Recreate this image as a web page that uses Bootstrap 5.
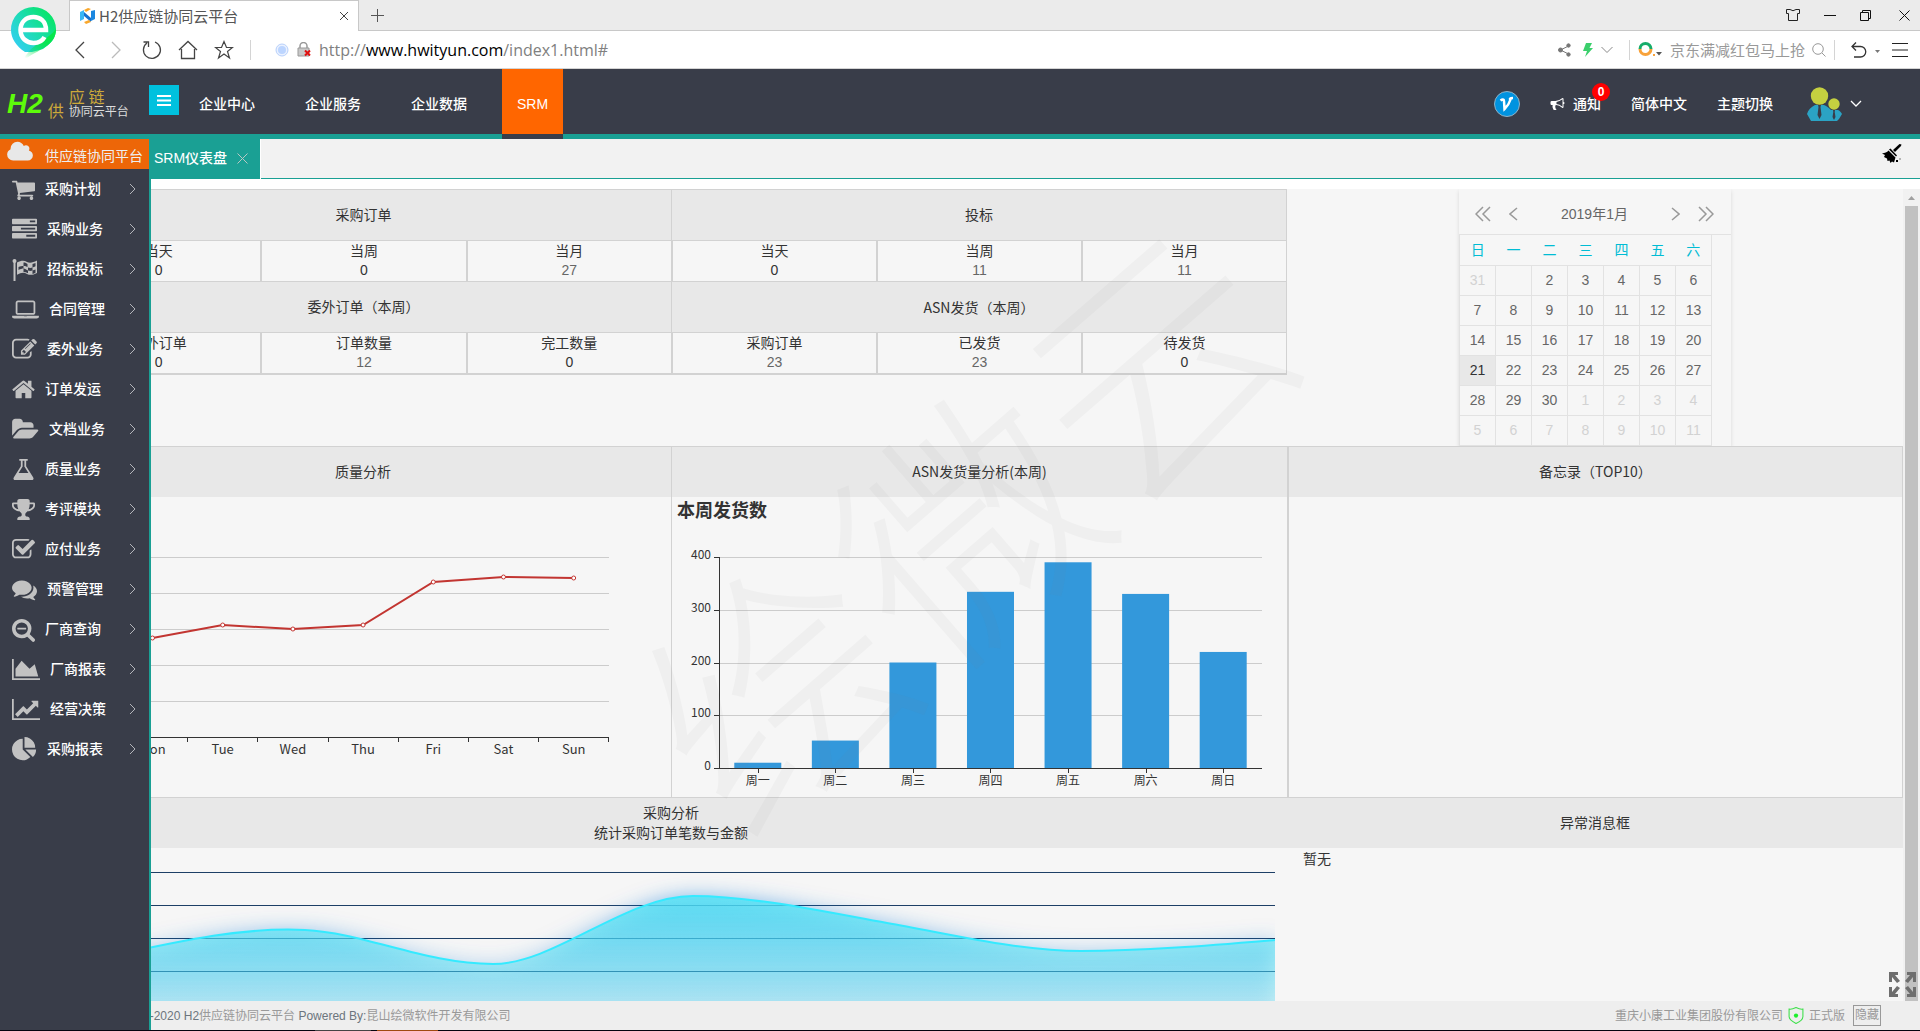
<!DOCTYPE html>
<html lang="zh-CN">
<head>
<meta charset="utf-8">
<meta name="viewport" content="width=device-width, initial-scale=1">
<title>H2供应链协同云平台</title>
<link href="https://cdn.jsdelivr.net/npm/bootstrap@5.3.0/dist/css/bootstrap.min.css" rel="stylesheet">
<script src="https://cdn.jsdelivr.net/npm/bootstrap@5.3.0/dist/js/bootstrap.bundle.min.js"></script>
<style>
  body { font-family: "Liberation Sans", "Noto Sans CJK SC", sans-serif; font-size: 14px; line-height: 20px; color: #333; background: #fff; }
  a { color: inherit; text-decoration: none; }
  button { background: none; border: 0; padding: 0; color: inherit; }
  svg { display: block; flex: none; }
  .yahei { font-family: "Noto Sans CJK SC", sans-serif; }

  /* browser window */
  .tabstrip { height: 31px; background: #ebebeb; border-bottom: 1px solid #c8c8c8; padding-left: 69px; padding-right: 10px; }
  .page-tab { width: 290px; height: 31px; background: #fff; border: 1px solid #c8c8c8; border-bottom: 0; padding: 0 9px 0 10px; font-size: 15px; color: #555; }
  .addressbar { height: 38px; border-bottom: 1px solid #d4d4d4; padding-left: 73px; padding-right: 12px; }
  .browser-logo { left: 8px; top: 5px; z-index: 5; }
  .address { font: 16px/24px "Open Sans", "Noto Sans", sans-serif; color: #808080; }
  .address b { font-weight: 400; color: #000; }
  .divider { width: 1px; height: 20px; background: #d4d4d4; }
  .find-box { width: 138px; border: 0; padding: 0; font: 15px/22px "Noto Sans CJK SC", sans-serif; outline: 0; }
  .find-box::placeholder { color: #999; opacity: 1; }

  /* application header */
  .app-header { height: 70px; background: #393d49; border-bottom: 5px solid #1aa094; color: #fff; }
  .brand { width: 149px; padding-left: 7px; gap: 5px; }
  .brand-h2 { font: italic 700 28px/28px "Liberation Sans", sans-serif; color: #5dfb0a; }
  .brand-gold { color: #cda93a; font: 16px/16px "Noto Sans CJK SC", sans-serif; }
  .brand-sub { color: #ddd; font: 12px/14px "Noto Sans CJK SC", sans-serif; }
  .menu-toggle { width: 30px; height: 30px; background: #00c1de; margin-top: 16px; display: flex; align-items: center; justify-content: center; }
  .top-link { height: 70px; padding: 25px 0 0; font-weight: 500; }
  .top-nav { gap: 50px; padding-left: 20px; }
  .top-link.chosen { background: #ff6600; border-bottom: 5px solid #393d49; padding: 25px 15px 0; margin-left: -15px; }
  .top-tools { gap: 30px; padding: 4px 58px 0 0; font-weight: 500; }
  .notice-count { left: 42px; top: -11px; width: 18px; height: 18px; border-radius: 9px; background: #f00; font-size: 12px; line-height: 18px; font-weight: 700; text-align: center; }

  /* side menu */
  .side-menu { left: 0; top: 0; bottom: 0; width: 151px; background: #393d49; border-right: 2px solid #1aa094; z-index: 3; color: #fff; }
  .side-title { height: 30px; background: #ed6608; padding-left: 7px; gap: 12px; color: #eee; }
  .side-item { height: 40px; padding: 0 13px 0 12px; gap: 10px; font-weight: 500; }
  .side-item svg { fill: #c2c2c2; }
  .side-title svg { fill: #e8e8e8; margin-bottom: 5px; }
  .side-title span { padding-top: 4px; }

  /* work area */
  .work { margin-left: 55px; }
  .work-tabs { height: 40px; background: #f2f2f2; border-bottom: 1px solid #1aa094; padding-left: 94px; padding-right: 18px; }
  .work-tab { height: 40px; background: #1aa094; color: #fff; padding: 0 12px 2px 5px; gap: 10px; font-weight: 500; border-right: 1px solid #fff; }
  .board { background: #f6f6f6; margin-top: 10px; }
  .stat-table { width: 100%; border-collapse: separate; border-spacing: 0; table-layout: fixed; text-align: center; border-bottom: 2px solid #d2d2d2; }
  .stat-table th { height: 51px; background: #e8e8e8; border-top: 1px solid #d2d2d2; border-left: 1px solid #d2d2d2; font-weight: 400; padding: 0; }
  .stat-table td { height: 41px; border-top: 1px solid #d2d2d2; border-left: 2px solid #d2d2d2; padding: 0; line-height: 19px; }
  .stat-table a { color: #666; }
  .edge-end { border-right: 1px solid #d2d2d2; }
  .line-top { border-top: 1px solid #d2d2d2; }
  .edge-start { border-left: 1px solid #d2d2d2; }
  .edge-start-2 { border-left: 2px solid #d2d2d2; }
  .overview { height: 257px; }
  .panel-title { height: 50px; padding-bottom: 2px; background: #e8e8e8; font-family: "Noto Sans CJK SC", sans-serif; display: flex; flex-direction: column; align-items: center; justify-content: center; }
  .panel-area { height: 300px; }
  .chart-name { font: 700 18px/24px "Noto Sans CJK SC", sans-serif; left: 5px; top: 0; margin: 0; }
  .chart-label { font: 12px "Noto Sans CJK SC", sans-serif; fill: #333; }
  .chart-label.latin { font-size: 13px; }

  .almanac { width: 272px; margin-left: 172px; box-shadow: 0 2px 4px rgba(0,0,0,.12); color: #666; height: 257px; }
  .almanac-head { height: 46px; padding: 4px 17px 0 16px; border-bottom: 1px solid #e2e2e2; gap: 18px; }
  .almanac-table { width: 253px; border-collapse: collapse; table-layout: fixed; text-align: center; font-size: 14px; border: 1px solid #e2e2e2; border-top: 0; }
  .almanac-table td { height: 30px; border: 1px solid #e2e2e2; padding: 0; }
  .almanac-table th { height: 30px; font-weight: 400; padding: 0; color: #00bcd4; border-bottom: 1px solid #e2e2e2; }
  .almanac-table .faded { color: #d2d2d2; }
  .almanac-table .now { background: #e8e8e8; color: #333; }

  .scroll-rail { width: 17px; background: #f1f1f1; }
  .scroll-thumb { width: 13px; background: #c1c1c1; }
  .page-foot { height: 29px; background: #eee; font-size: 12px; color: #999; padding-left: 68px; padding-right: 39px; }
  .hide-btn { border: 1px solid #999; height: 21px; width: 28px; line-height: 19px; background: #eee; font-size: 12px; color: #999; white-space: nowrap; }
  .task-edge { height: 1px; background: linear-gradient(90deg, #05050f 315px, #444 315px 371px, #05050f 371px 377px, #a04a10 377px 438px, #05050f 438px); z-index: 4; }
  .expand-btn { right: 3px; bottom: 32px; z-index: 4; }
  .watermark { left: 958px; top: 378px; z-index: 2; pointer-events: none; font: 300 250px/300px "Noto Sans CJK SC", sans-serif; color: rgba(130,130,130,.055); white-space: nowrap; transform: translate(-50%, -50%) rotate(-41deg); }
</style>
</head>
<body class="vh-100 d-flex flex-column overflow-hidden position-relative">

<svg class="browser-logo position-absolute" width="52" height="58" viewBox="0 0 52 58">
  <defs>
    <linearGradient id="pin" x1="0" y1=".9" x2=".9" y2=".2"><stop offset="0" stop-color="#36cdfb"/><stop offset=".5" stop-color="#1edbb8"/><stop offset="1" stop-color="#08e56a"/></linearGradient>
    <linearGradient id="tail" x1="1" y1="0" x2=".2" y2="1"><stop offset="0" stop-color="#06e848"/><stop offset=".4" stop-color="#08e552"/><stop offset="1" stop-color="#08e552" stop-opacity="0"/></linearGradient>
  </defs>
  <path d="M25.500 2a22.500 22.500 0 0 1 22.500 22c0 10-6 15-13 20l-11 3-7 0C8 41 3 33 3 25A22.500 22.500 0 0 1 25.500 2z" fill="url(#pin)"/>
  <path d="M48 24c0 17-17 20-34 32 2-4 6-8 9-12l12-9c5-3 9-6 13-11z" fill="url(#tail)"/>
  <path d="M14 25h24C38 16 32 12 25.500 12C18 12 12.500 17 12.500 25c0 8 6 13 13 13 5 0 9-2 11-6" fill="none" stroke="#fff" stroke-width="4.500"/>
</svg>

<div class="tabstrip d-flex align-items-center flex-shrink-0">
  <div class="page-tab d-flex align-items-center yahei">
    <svg width="15" height="16" viewBox="0 0 15 16"><path d="M0 4l4-2v9l-4 2z" fill="#38b6f5"/><path d="M4 4l7 6v4L4 8z" fill="#1470d0"/><path d="M11 3l4-1v9l-4 2z" fill="#1b87e0"/><path d="M4 2l4-2 3 1-5 3z" fill="#f9a72b"/><path d="M11 14l-5 2-2-2 5-2z" fill="#f9a72b"/></svg>
    <span class="ms-1 flex-fill">H2供应链协同云平台</span>
    <button type="button" aria-label="关闭标签页"><svg width="10" height="10" viewBox="0 0 10 10" stroke="#444"><path d="M1 1l8 8M9 1l-8 8"/></svg></button>
  </div>
  <button type="button" aria-label="新建标签页" class="ms-2 ps-1"><svg width="13" height="13" viewBox="0 0 13 13" stroke="#555"><path d="M6.500 0v13M0 6.500h13"/></svg></button>
  <div class="ms-auto d-flex align-items-center">
    <button type="button" aria-label="皮肤"><svg width="14" height="12" viewBox="0 0 14 12" fill="none" stroke="#222"><path d="M4 .5Q7 3 10 .5l3.500 0v4h-2v7h-9v-7h-2v-4z"/></svg></button>
    <button type="button" aria-label="最小化" class="ms-4"><svg width="12" height="12" viewBox="0 0 12 12" stroke="#111"><path d="M0 6.500h12"/></svg></button>
    <button type="button" aria-label="还原" class="ms-4"><svg width="11" height="11" viewBox="0 0 11 11" fill="none" stroke="#111"><path d="M.5 2.500h8v8h-8zM2.500 2.500v-2h8v8h-2"/></svg></button>
    <button type="button" aria-label="关闭" class="ms-4 ps-1"><svg width="11" height="11" viewBox="0 0 11 11" stroke="#111"><path d="M.5.5l10 10M10.500.5l-10 10"/></svg></button>
  </div>
</div>

<div class="addressbar d-flex align-items-center flex-shrink-0">
  <button type="button" aria-label="后退"><svg width="14" height="18" viewBox="0 0 14 18" fill="none" stroke="#444" stroke-width="1.300"><path d="M11 1L3 9l8 8"/></svg></button>
  <button type="button" aria-label="前进" class="ms-4"><svg width="11" height="18" viewBox="0 0 11 18" fill="none" stroke="#bbb" stroke-width="1.300"><path d="M1 1l8 8-8 8"/></svg></button>
  <button type="button" aria-label="刷新" class="ms-3 ps-1"><svg width="20" height="20" viewBox="0 0 20 20" fill="none" stroke="#444" stroke-width="1.300"><path d="M13 2a8.500 8.500 0 1 1-8 1M1.500 2h5v5"/></svg></button>
  <button type="button" aria-label="主页" class="ms-3"><svg width="20" height="20" viewBox="0 0 20 20" fill="none" stroke="#444" stroke-width="1.300"><path d="M1 10l9-8.500 9 8.500M3.500 9v9.500h13V9"/></svg></button>
  <button type="button" aria-label="收藏" class="ms-3"><svg width="20" height="20" viewBox="0 0 20 20" fill="none" stroke="#444" stroke-width="1.200"><path d="M10 1.500l2.500 6h6l-5 4 2 6.500-5.500-4-5.500 4 2-6.500-5-4h6z"/></svg></button>
  <span class="divider ms-3 me-3"></span>
  <svg class="ms-2 me-2" width="14" height="14" viewBox="0 0 14 14"><circle cx="7" cy="7" r="6" fill="#eaf1ff" stroke="#b7d0fb"/><circle cx="7" cy="7" r="4" fill="#bcd5ff"/></svg>
  <svg class="me-2" width="14" height="15" viewBox="0 0 14 15"><path d="M3 6V4a3.500 3.500 0 0 1 7 0v2" fill="none" stroke="#999" stroke-width="1.500"/><path d="M1 6h11v8H1z" fill="#c8c8c8" stroke="#999"/><path d="M8 8.500l5 5M13 8.500l-5 5" stroke="#e01010" stroke-width="2"/></svg>
  <div class="address" role="textbox" aria-label="地址">http://<b>www.hwityun.com</b>/index1.html#</div>
  <div class="ms-auto d-flex align-items-center">
    <button type="button" aria-label="分享"><svg width="13" height="14" viewBox="0 0 13 14" fill="#777" stroke="#777"><path d="M10.500 3L2.500 7l8 4" fill="none"/><circle cx="10.500" cy="2.500" r="1.700"/><circle cx="2.500" cy="7" r="2"/><circle cx="10.500" cy="11.500" r="1.700"/></svg></button>
    <svg class="ms-2 me-2 ps-1" width="14" height="14" viewBox="0 0 10 14"><path d="M3 0h6L6.500 5H10L2 14l2-6H0z" fill="#3bcf6c"/></svg>
    <button type="button" aria-label="更多"><svg width="12" height="8" viewBox="0 0 12 8" fill="none" stroke="#888"><path d="M.5 1L6 6.500 11.500 1"/></svg></button>
    <span class="divider mx-2 ms-3"></span>
    <svg width="18" height="15" viewBox="0 0 18 15" fill="none" stroke-width="3"><path d="M2 7a5.500 5.500 0 0 1 11 0" stroke="#17ad6b"/><path d="M2 7a5.500 5.500 0 0 0 11 0" stroke="#f8a23a"/><path d="M15 13h2" stroke="#f8a23a" stroke-width="2"/></svg>
    <svg class="mt-2 me-2" width="6" height="4" viewBox="0 0 6 4"><path d="M0 0h6L3 3.500z" fill="#555"/></svg>
    <input class="find-box" type="text" aria-label="搜索" placeholder="京东满减红包马上抢">
    <button type="button" aria-label="搜索" class="ms-1"><svg width="14" height="14" viewBox="0 0 14 14" fill="none" stroke="#999"><circle cx="6" cy="6" r="5.300"/><path d="M10 10l3.500 3.500"/></svg></button>
    <span class="divider mx-2 ms-2"></span>
    <button type="button" aria-label="撤销" class="ms-2"><svg width="16" height="16" viewBox="0 0 16 16" fill="none" stroke="#333" stroke-width="1.300"><path d="M5 .5L1 4.500l4 4M1 4.500h8.500a5 5 0 0 1 0 10.500H3"/></svg></button>
    <svg class="ms-2 mt-1" width="5" height="3" viewBox="0 0 5 3"><path d="M0 0h5L2.500 3z" fill="#777"/></svg>
    <button type="button" aria-label="菜单" class="ms-2 ps-1"><svg width="16" height="14" viewBox="0 0 16 14" stroke="#222"><path d="M0 .5h16M0 7h16M0 13.500h16"/></svg></button>
  </div>
</div>

<header class="app-header d-flex flex-shrink-0">
  <div class="brand d-flex align-items-end pb-3 flex-shrink-0 text-nowrap">
    <span class="brand-h2">H2</span>
    <span class="brand-gold">供</span>
    <div><div class="brand-gold">应 链</div><div class="brand-sub">协同云平台</div></div>
  </div>
  <button type="button" class="menu-toggle flex-shrink-0" aria-label="切换菜单"><svg width="14" height="11" viewBox="0 0 14 11" stroke="#fff" stroke-width="2"><path d="M0 1h14M0 5.500h14M0 10h14"/></svg></button>
  <nav class="top-nav d-flex text-nowrap">
    <a class="top-link" href="#">企业中心</a>
    <a class="top-link" href="#">企业服务</a>
    <a class="top-link" href="#">企业数据</a>
    <a class="top-link chosen" href="#">SRM</a>
  </nav>
  <div class="top-tools ms-auto d-flex align-items-center text-nowrap">
    <a href="#" aria-label="V"><svg width="26" height="26" viewBox="0 0 26 26"><circle cx="13" cy="13" r="12.500" fill="#0093e0" stroke="#8fb3c8"/><path d="M6.500 9.500c2-1.500 3.500-1.500 3.500.5l.5 8c3-3 5-6 6-9.500-1-.5-1-1.500 2.500-1.500" fill="none" stroke="#fff" stroke-width="2.500"/></svg></a>
    <a href="#" class="position-relative d-flex align-items-center"><svg class="me-2" width="15" height="14" viewBox="0 0 1792 1792" fill="#fff"><path d="M1664 640q53 0 90.500 37.500t37.500 90.500-37.500 90.500-90.500 37.500v384q0 52-38 90t-90 38q-417-347-812-380-58 19-91 66t-31 100.500 40 92.500q-20 33-23 65.500t6 58 33.500 55 48 50 61.500 50.500q-29 58-111.500 83t-168.500 11.500-132-55.500q-7-23-29.500-87.500t-32-94.500-23-89-15-101 3.500-98.500 22-110.500h-122q-66 0-113-47t-47-113v-192q0-66 47-113t113-47h480q435 0 896-384 52 0 90 38t38 90v384zm-128 604v-954q-394 302-768 343v270q377 42 768 341z"/></svg>通知<span class="notice-count position-absolute">0</span></a>
    <a href="#">简体中文</a>
    <a href="#">主题切换</a>
    <a href="#" class="d-flex align-items-center ms-1" aria-label="用户"><svg width="35" height="34" viewBox="0 0 35 34"><circle cx="12.500" cy="9" r="8.700" fill="#c5d040"/><path d="M0 27c1-4 4-7 8-9h9c3 1 5 3 7 5h7c2 1 3 2 4 4l-3 5-2 2H4z" fill="#2ba3c4"/><circle cx="27" cy="17" r="5.700" fill="#c5d040"/><path d="M11 18h3l-.5 2 1 8-2 4-2-4 1-8zM26 23h2l-.3 2 .8 5-1.500 3-1.500-3 .8-5z" fill="#393d49"/></svg>
      <svg class="ms-2" width="12" height="8" viewBox="0 0 12 8" fill="none" stroke="#fff" stroke-width="1.300"><path d="M1 1l5 5 5-5"/></svg></a>
  </div>
</header>

<div class="flex-fill position-relative d-flex flex-column overflow-hidden">
  <nav class="side-menu position-absolute text-nowrap">
    <a href="#" class="side-title d-flex align-items-center"><svg width="26" height="24" viewBox="64 0 1920 1792"><path d="M1984 1152q0 159-112.500 271.500t-271.500 112.500h-1088q-185 0-316.500-131.500t-131.500-316.500q0-132 71-241.500t187-163.500q-2-28-2-43 0-212 150-362t362-150q158 0 286.500 88t187.500 230q70-62 166-62 106 0 181 75t75 181q0 75-41 138 129 30 213 134.500t84 239.500z"/></svg><span>供应链协同平台</span></a>
    <div id="side-list"></div>
  </nav>

  <main class="work flex-fill d-flex flex-column overflow-hidden">
    <div class="work-tabs d-flex align-items-start flex-shrink-0">
      <div class="work-tab d-flex align-items-center"><a href="#">SRM仪表盘</a><button type="button" aria-label="关闭"><svg width="11" height="11" viewBox="0 0 11 11" stroke="#b8c8c4"><path d="M.5.5l10 10M10.500.5l-10 10"/></svg></button></div>
      <button type="button" class="ms-auto mt-1" aria-label="清理"><svg width="20" height="21" viewBox="0 0 20 21"><path d="M17.500 1L19.500 1.500 19 3l-6 6-2-2z"/><path d="M8.500 5.500l6.500 7-1 1-7-7z"/><path d="M6.500 7.500l7 7-1.500 5-2-1-1.500 1.500-1-2.500-2 .5-.5-2.500L2 14l1-2L0 10.500C3 10 5 9.500 6.500 7.500z"/><path d="M14 17h2v2h-2zM17.500 15.500h1v1h-1z"/></svg></button>
    </div>

    <div class="board flex-fill d-flex overflow-hidden">
      <div class="flex-fill">
        <section class="row g-0 overview">
          <div class="col-4">
            <table class="stat-table">
              <tr><th colspan="3">采购订单</th></tr>
              <tr><td>当天<br>0</td><td>当周<br>0</td><td>当月<br><a href="#">27</a></td></tr>
              <tr><th colspan="3">委外订单（本周）</th></tr>
              <tr><td>委外订单<br>0</td><td>订单数量<br><a href="#">12</a></td><td>完工数量<br>0</td></tr>
            </table>
          </div>
          <div class="col-4">
            <table class="stat-table edge-end">
              <tr><th colspan="3">投标</th></tr>
              <tr><td>当天<br>0</td><td>当周<br><a href="#">11</a></td><td>当月<br><a href="#">11</a></td></tr>
              <tr><th colspan="3" class="yahei">ASN发货（本周）</th></tr>
              <tr><td>采购订单<br><a href="#">23</a></td><td>已发货<br><a href="#">23</a></td><td>待发货<br>0</td></tr>
            </table>
          </div>
          <div class="col-4">
            <div class="almanac">
              <div class="almanac-head d-flex align-items-center">
                <button type="button" aria-label="上一年"><svg width="16" height="16" viewBox="0 0 16 16" fill="none" stroke="#999" stroke-width="1.500"><path d="M8 1L1 8l7 7M15 1L8 8l7 7"/></svg></button>
                <button type="button" aria-label="上一月"><svg width="9" height="14" viewBox="0 0 9 14" fill="none" stroke="#999" stroke-width="1.500"><path d="M8 1L1 7l7 6"/></svg></button>
                <span class="mx-auto">2019年1月</span>
                <button type="button" aria-label="下一月"><svg width="9" height="14" viewBox="0 0 9 14" fill="none" stroke="#999" stroke-width="1.500"><path d="M1 1l7 6-7 6"/></svg></button>
                <button type="button" aria-label="下一年"><svg width="16" height="16" viewBox="0 0 16 16" fill="none" stroke="#999" stroke-width="1.500"><path d="M1 1l7 7-7 7M8 1l7 7-7 7"/></svg></button>
              </div>
              <table class="almanac-table">
                <thead><tr><th>日</th><th>一</th><th>二</th><th>三</th><th>四</th><th>五</th><th>六</th></tr></thead>
                <tbody>
                  <tr><td class="faded">31</td><td></td><td>2</td><td>3</td><td>4</td><td>5</td><td>6</td></tr>
                  <tr><td>7</td><td>8</td><td>9</td><td>10</td><td>11</td><td>12</td><td>13</td></tr>
                  <tr><td>14</td><td>15</td><td>16</td><td>17</td><td>18</td><td>19</td><td>20</td></tr>
                  <tr><td class="now">21</td><td>22</td><td>23</td><td>24</td><td>25</td><td>26</td><td>27</td></tr>
                  <tr><td>28</td><td>29</td><td>30</td><td class="faded">1</td><td class="faded">2</td><td class="faded">3</td><td class="faded">4</td></tr>
                  <tr><td class="faded">5</td><td class="faded">6</td><td class="faded">7</td><td class="faded">8</td><td class="faded">9</td><td class="faded">10</td><td class="faded">11</td></tr>
                </tbody>
              </table>
            </div>
          </div>
        </section>

        <section class="row g-0">
          <div class="col-4 line-top">
            <div class="panel-title">质量分析</div>
            <div class="panel-area"><svg id="quality" width="100%" height="300" viewBox="0 0 616 300"></svg></div>
          </div>
          <div class="col-4 line-top edge-start">
            <div class="panel-title">ASN发货量分析(本周)</div>
            <div class="panel-area position-relative">
              <h2 class="chart-name position-absolute">本周发货数</h2>
              <svg id="shipping" width="100%" height="300" viewBox="1 0 615 300"></svg>
            </div>
          </div>
          <div class="col-4 line-top edge-start-2 edge-end">
            <div class="panel-title">备忘录（TOP10）</div>
            <div class="panel-area"></div>
          </div>
        </section>

        <section class="row g-0">
          <div class="col-8 line-top">
            <div class="panel-title"><span>采购分析</span><span>统计采购订单笔数与金额</span></div>
            <svg width="100%" height="260" viewBox="0 0 1232 260">
              <defs>
                <linearGradient id="sea" x1="0" y1="48" x2="0" y2="200" gradientUnits="userSpaceOnUse"><stop offset="0" stop-color="#4de1f5" stop-opacity=".8"/><stop offset="1" stop-color="#4de1f5" stop-opacity=".05"/></linearGradient>
                <filter id="glow" x="-5%" y="-40%" width="110%" height="180%"><feDropShadow dx="0" dy="0" stdDeviation="10" flood-color="#0a72d8" flood-opacity=".65"/></filter>
                <clipPath id="plot"><path d="M0 0h1220v260H0z"/></clipPath>
              </defs>
              <path d="M0 24.500h1220M0 57.500h1220M0 90.500h1220M0 123.500h1220M0 156.500h1220" stroke="#1d3f66" shape-rendering="crispEdges"/>
              <g clip-path="url(#plot)">
                <path filter="url(#glow)" fill="url(#sea)" d="M56 108C130 92 190 79 250 82C310 85 370 116 438 116C500 116 570 48 638 48C700 48 780 66 832 75C900 87 965 103 1026 103C1090 103 1160 97 1220 92V260H56z"/>
                <path fill="none" stroke="#35eaff" stroke-width="2" d="M56 108C130 92 190 79 250 82C310 85 370 116 438 116C500 116 570 48 638 48C700 48 780 66 832 75C900 87 965 103 1026 103C1090 103 1160 97 1220 92"/>
              </g>
            </svg>
          </div>
          <div class="col-4 line-top">
            <div class="panel-title">异常消息框</div>
            <div class="yahei px-3">暂无</div>
          </div>
        </section>
      </div>
      <div class="scroll-rail d-flex flex-column align-items-center flex-shrink-0">
        <svg width="17" height="17" viewBox="0 0 17 17"><path d="M5 11l3.500-4 3.500 4z" fill="#a0a0a0"/></svg>
        <div class="scroll-thumb flex-fill"></div>
      </div>
    </div>

    <footer class="page-foot d-flex align-items-center flex-shrink-0 text-nowrap">
      <span><span class="text-secondary">2016-2020 H2</span>供应链协同云平台 <span class="text-secondary">Powered By:</span>昆山绘微软件开发有限公司</span>
      <span class="ms-auto">重庆小康工业集团股份有限公司</span>
      <svg class="mx-1" width="18" height="17" viewBox="0 0 16 16"><path d="M8 .5c2 1 4 2 6.500 1.500V9c0 3-3 5-6.500 6.500C5 14 1.500 12 1.500 9V2C4 2.500 6 1.500 8 .5z" fill="none" stroke="#3de04a"/><circle cx="8" cy="8" r="2" fill="#1df02c"/></svg>
      <span>正式版</span>
      <button type="button" class="hide-btn ms-2">隐藏</button>
    </footer>
  </main>

  <div class="watermark position-absolute" aria-hidden="true">绘微云</div>
  <button type="button" class="expand-btn position-absolute" aria-label="全屏"><svg width="29" height="27" viewBox="0 0 29 27" fill="#6e6e6e"><path d="M1 1h9v3H7l5 6-3 2-5-6v5H1z"/><path d="M28 1h-9v3h3l-5 6 3 2 5-6v5h3z"/><path d="M1 26h9v-3H7l5-6-3-2-5 6v-5H1z"/><path d="M28 26h-9v-3h3l-5-6 3-2 5 6v-5h3z"/></svg></button>
</div>
<div class="task-edge flex-shrink-0 position-relative"></div>

<script>
  // Side menu: label, icon width, icon viewBox, icon shape
  const p = d => `<path d="${d}"/>`;
  const items = [
    ['采购计划', 23, '64 0 1664 1792', p('M704 1536q0 52-38 90t-90 38-90-38-38-90 38-90 90-38 90 38 38 90zm896 0q0 52-38 90t-90 38-90-38-38-90 38-90 90-38 90 38 38 90zm128-1088v512q0 24-16.5 42.5t-40.5 21.5l-1044 122q13 60 13 70 0 16-24 64h920q26 0 45 19t19 45-19 45-45 19h-1024q-26 0-45-19t-19-45q0-11 8-31.5t16-36 21.5-40 15.5-29.5l-177-823h-204q-26 0-45-19t-19-45 19-45 45-19h256q16 0 28.5 6.5t19.5 15.5 13 24.5 8 26 5.5 29.5 4.5 26h1201q26 0 45 19t19 45z')],
    ['采购业务', 25, '0 0 1792 1792', p('M1024 1408h640v-128h-640v128zm-384-512h1024v-128h-1024v128zm640-512h384v-128h-384v128zm512 832v256q0 26-19 45t-45 19h-1664q-26 0-45-19t-19-45v-256q0-26 19-45t45-19h1664q26 0 45 19t19 45zm0-512v256q0 26-19 45t-45 19h-1664q-26 0-45-19t-19-45v-256q0-26 19-45t45-19h1664q26 0 45 19t19 45zm0-512v256q0 26-19 45t-45 19h-1664q-26 0-45-19t-19-45v-256q0-26 19-45t45-19h1664q26 0 45 19t19 45z')],
    ['招标投标', 25, '0 0 25 25', '<circle cx="2.500" cy="4" r="2"/><path d="M1.500 4h2v20h-2z"/><path fill-rule="evenodd" d="M5 5.500c4-2 7-2.500 10-.5 3 1.500 6 .5 10-1.500v12.500c-4 2-7 2.500-10 1-3-2-6-1.500-10 .8zM6.500 10v3c2-1 3.500-1.500 5-1.500V9c-2 0-3 .3-5 1zM11.500 5.500V9c2 0 3 .5 4 1V7c-1-.8-2-1.500-4-1.500zM16 10.500v3c2 .5 3 .5 4.500 0v-3c-1.500.5-3 .5-4.500 0zM20.500 7v3.500c1-.3 2-.7 3-1.300V6c-1 .5-2 .8-3 1zM11.500 11.500v3.500c1.500 0 3 .5 4.500 1.200V13.500c-1.500-.8-3-1.800-4.500-2zM20.500 13.500V17c1-.2 2-.6 3-1.200V12.500c-1 .5-2 .8-3 1z"/>'],
    ['合同管理', 27, '0 0 1920 1792', p('M416 1280q-66 0-113-47t-47-113v-704q0-66 47-113t113-47h1088q66 0 113 47t47 113v704q0 66-47 113t-113 47h-1088zm-32-864v704q0 13 9.5 22.5t22.5 9.5h1088q13 0 22.5-9.5t9.5-22.5v-704q0-13-9.5-22.5t-22.5-9.5h-1088q-13 0-22.5 9.5t-9.5 22.5zm1376 928h160v96q0 40-47 68t-113 28h-1600q-66 0-113-28t-47-68v-96h1760zm-720 96q16 0 16-16t-16-16h-160q-16 0-16 16t16 16h160z')],
    ['委外业务', 25, '0 0 1792 1792', p('M888 1184l116-116-152-152-116 116v56h96v96h56zm440-720q-16-16-33 1l-350 350q-17 17-1 33t33-1l350-350q17-17 1-33zm80 594v190q0 119-84.5 203.5t-203.5 84.5h-832q-119 0-203.5-84.5t-84.5-203.5v-832q0-119 84.5-203.5t203.5-84.5h832q63 0 117 25 15 7 18 23 3 17-9 29l-49 49q-14 14-32 8-23-6-45-6h-832q-66 0-113 47t-47 113v832q0 66 47 113t113 47h832q66 0 113-47t47-113v-126q0-13 9-22l64-64q15-15 35-7t20 29zm-96-738l288 288-672 672h-288v-288zm444 132l-92 92-288-288 92-92q28-28 68-28t68 28l152 152q28 28 28 68t-28 68z')],
    ['订单发运', 23, '64 0 1664 1792', p('M1472 992v480q0 26-19 45t-45 19h-384v-384h-256v384h-384q-26 0-45-19t-19-45v-480q0-1 .5-3t.5-3l575-474 575 474q1 2 1 6zm223-69l-62 74q-8 9-21 11h-3q-13 0-21-7l-692-577-692 577q-12 8-24 7-13-2-21-11l-62-74q-8-10-7-23.5t11-21.5l719-599q32-26 76-26t76 26l244 204v-195q0-14 9-23t23-9h192q14 0 23 9t9 23v408l219 182q10 8 11 21.5t-7 23.5z')],
    ['文档业务', 27, '0 0 1920 1792', p('M1879 952q0 31-31 66l-336 396q-43 51-120.5 86.5t-143.5 35.5h-1088q-34 0-60.5-13t-26.5-43q0-31 31-66l336-396q43-51 120.5-86.5t143.5-35.5h1088q34 0 60.5 13t26.5 43zm-343-344v160h-832q-94 0-197 47.5t-164 119.5l-337 396-5 6q0-4-.5-12.5t-.5-12.5v-960q0-92 66-158t158-66h320q92 0 158 66t66 158v32h544q92 0 158 66t66 158z')],
    ['质量业务', 23, '64 0 1664 1792', p('M1591 1448q56 89 21.5 152.5t-140.5 63.5h-1152q-106 0-140.5-63.5t21.5-152.5l503-793v-399h-64q-26 0-45-19t-19-45 19-45 45-19h512q26 0 45 19t19 45-19 45-45 19h-64v399zm-779-725l-272 429h712l-272-429-20-31v-436h-128v436z')],
    ['考评模块', 23, '64 0 1664 1792', p('M522 883q-74-162-74-371h-256v96q0 78 94.5 162t235.5 113zm1078-275v-96h-256q0 209-74 371 141-29 235.5-113t94.5-162zm128-128v128q0 71-41.5 143t-112 130-173 97.5-215.5 44.5q-42 54-95 95-38 34-52.5 72.5t-14.5 89.5q0 54 30.5 91t97.5 37q75 0 133.5 45.5t58.5 114.5v64q0 14-9 23t-23 9h-832q-14 0-23-9t-9-23v-64q0-69 58.5-114.5t133.5-45.5q67 0 97.5-37t30.5-91q0-51-14.5-89.5t-52.5-72.5q-53-41-95-95-113-5-215.5-44.5t-173-97.5-112-130-41.5-143v-128q0-40 28-68t68-28h288v-96q0-66 47-113t113-47h576q66 0 113 47t47 113v96h288q40 0 68 28t28 68z')],
    ['应付业务', 23, '64 0 1664 1792', p('M1472 930v318q0 119-84.5 203.5t-203.5 84.5h-832q-119 0-203.5-84.5t-84.5-203.5v-832q0-119 84.5-203.5t203.5-84.5h832q63 0 117 25 15 7 18 23 3 17-9 29l-49 49q-10 10-23 10-3 0-9-2-23-6-45-6h-832q-66 0-113 47t-47 113v832q0 66 47 113t113 47h832q66 0 113-47t47-113v-254q0-13 9-22l64-64q10-10 23-10 6 0 12 3 20 8 20 29zm231-489l-814 814q-24 24-57 24t-57-24l-430-430q-24-24-24-57t24-57l110-110q24-24 57-24t57 24l263 263 647-647q24-24 57-24t57 24l110 110q24 24 24 57t-24 57z')],
    ['预警管理', 25, '0 0 1792 1792', p('M1408 768q0 139-94 257t-256.5 186.5-353.5 68.5q-86 0-176-16-124 88-278 128-36 9-86 16h-3q-11 0-20.5-8t-11.5-21q-1-3-1-6.5t.5-6.5 2-6l2.5-5 3.500-5.500 4-5 4.500-5 4-4.500q5-6 23-25t26-29.500 22.500-29 25-38.500 20.500-44q-124-72-195-177t-71-224q0-139 94-257t256.500-186.500 353.500-68.500 353.500 68.500 256.500 186.500 94 257zm384 256q0 120-71 224.500t-195 176.500q10 24 20.500 44t25 38.500 22.500 29 26 29.500 23 25q1 1 4 4.500t4.500 5 4 5 3.500 5.500l2.500 5 2 6 .5 6.500-1 6.500q-3 14-13 22t-22 7q-50-7-86-16-154-40-278-128-90 16-176 16-271 0-472-132 58 4 88 4 161 0 309-45t264-129q125-92 192-212t67-254q0-77-23-152 129 71 204 178t75 230z')],
    ['厂商查询', 23, '64 0 1664 1792', p('M1088 800v64q0 13-9.5 22.5t-22.5 9.5h-576q-13 0-22.5-9.5t-9.5-22.5v-64q0-13 9.5-22.5t22.5-9.5h576q13 0 22.5 9.5t9.5 22.5zm128 32q0-185-131.5-316.5t-316.5-131.5-316.5 131.5-131.5 316.5 131.5 316.5 316.5 131.5 316.5-131.5 131.5-316.5zm512 832q0 53-37.5 90.5t-90.5 37.5q-54 0-90-38l-343-342q-179 124-399 124-143 0-273.5-55.5t-225-150-150-225-55.5-273.5 55.5-273.5 150-225 225-150 273.5-55.5 273.5 55.5 225 150 150 225 55.5 273.5q0 220-124 399l343 343q37 37 37 90z')],
    ['厂商报表', 28, '0 0 2048 1792', p('M2048 1536v128h-2048v-1536h128v1408h1920zm-384-1024l256 896h-1664v-576l448-576 576 576z')],
    ['经营决策', 28, '0 0 2048 1792', p('M2048 1536v128h-2048v-1536h128v1408h1920zm-128-1248v435q0 21-19.5 29.5t-35.5-7.5l-121-121-633 633q-10 10-23 10t-23-10l-233-233-416 416-192-192 585-585q10-10 23-10t23 10l233 233 464-464-121-121q-16-16-7.5-35.5t29.5-19.5h435q14 0 23 9t9 23z')],
    ['采购报表', 25, '0 0 1792 1792', p('M768 890l546 546q-106 108-247.5 168t-298.5 60q-209 0-385.5-103t-279.5-279.5-103-385.5 103-385.5 279.5-279.5 385.5-103v762zm187 6h773q0 157-60 298.5t-168 247.5zm709-128h-768v-768q209 0 385.5 103t279.5 279.5 103 385.5z')]
  ];
  document.getElementById('side-list').innerHTML = items.map(([t, w, box, shape]) =>
    `<a href="#" class="side-item d-flex align-items-center"><svg width="${w}" height="25" viewBox="${box}">${shape}</svg><span>${t}</span>` +
    `<svg class="ms-auto" width="7" height="12" viewBox="0 0 7 12"><path d="M1 1l5 5-5 5" fill="none" stroke="#b4b6bb"/></svg></a>`).join('');

  // Straight axis and grid lines stay sharp at any chart width
  const rule = (d, c) => `<path d="${d}" stroke="${c}" shape-rendering="crispEdges"/>`;

  // Quality line chart
  const days = ['Mon', 'Tue', 'Wed', 'Thu', 'Fri', 'Sat', 'Sun'];
  const ys = [141, 128, 132, 128, 85, 80, 81];
  const px = i => 97.5 + i * 70.2;
  let q = '';
  for (let i = 0; i < 5; i++) q += rule(`M62 ${60.5 + i * 36}H554`, '#ccc');
  q += rule('M62 240.500H554', '#333');
  for (let i = 0; i < 8; i++) q += rule(`M${Math.round(62 + i * 70.2) + .5} 240v5`, '#333');
  q += `<polyline fill="none" stroke="#c23531" stroke-width="2" points="${ys.map((y, i) => px(i) + ',' + y).join(' ')}"/>`;
  ys.forEach((y, i) => {
    q += `<circle cx="${px(i)}" cy="${y}" r="2" fill="#fff" stroke="#c23531"/>`;
    q += `<text class="chart-label latin" x="${px(i)}" y="257" text-anchor="middle">${days[i]}</text>`;
  });
  document.getElementById('quality').innerHTML = q;

  // Weekly shipping bar chart
  const ship = [['周一', 10], ['周二', 52], ['周三', 200], ['周四', 334], ['周五', 390], ['周六', 330], ['周日', 220]];
  let b = '';
  for (let i = 0; i < 5; i++) {
    const y = Math.round(271 - i * 52.75) + .5;
    b += i ? rule(`M48 ${y}H591`, '#ccc') : '';
    b += rule(`M43 ${y}h5`, '#333') + `<text class="chart-label" x="40" y="${y + 2}" text-anchor="end">${i * 100}</text>`;
  }
  ship.forEach(([d, v], i) => {
    const cx = 48 + 77.57 * (i + .5), h = v * .5275;
    b += `<rect x="${cx - 23.5}" y="${271 - h}" width="47" height="${h}" fill="#3398db"/>` + rule(`M${Math.round(cx) + .5} 271v5`, '#333');
    b += `<text class="chart-label" x="${cx}" y="288" text-anchor="middle">${d}</text>`;
  });
  b += rule('M48.500 60v212M48 271.500H591', '#333');
  document.getElementById('shipping').innerHTML = b;
</script>
</body>
</html>
